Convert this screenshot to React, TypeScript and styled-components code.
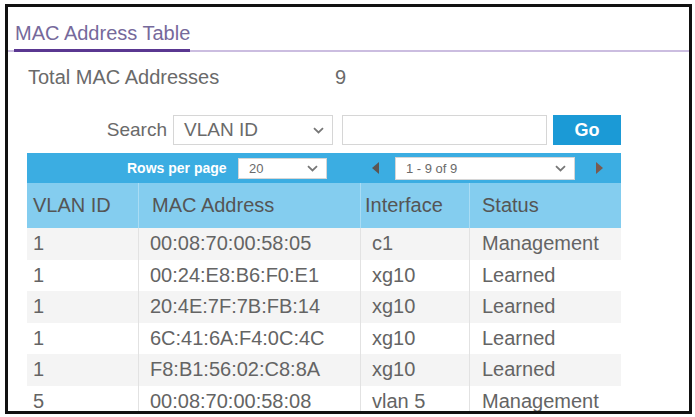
import styled, { createGlobalStyle } from 'styled-components'

const GlobalStyle = createGlobalStyle`
  html, body {
    margin: 0;
    padding: 0;
    background: #ffffff;
  }
  body {
    font-family: 'Liberation Sans', Arial, sans-serif;
    color: #5a5a5a;
  }
`

const Page = styled.div`
  width: 695px;
  height: 417px;
  padding: 4px 3px 3px 5px;
  box-sizing: border-box;
`

const Frame = styled.div`
  height: 100%;
  border: 3px solid #111;
  box-sizing: border-box;
  overflow: hidden;
  background: #fff;
  padding-top: 14px;
`

const TabBar = styled.div`
  display: flex;
  border-bottom: 2px solid #cbbde0;
`

const Tab = styled.div`
  margin-left: 6px;
  padding: 0 0 4px 1px;
  font-size: 20px;
  line-height: 24px;
  color: #76699b;
  border-bottom: 3px solid #5a3791;
  margin-bottom: -2px;
`

const Content = styled.div`
  padding: 0 68px 0 19px;
`

const TotalRow = styled.div`
  display: grid;
  grid-template-columns: 307px auto;
  padding: 13px 0 0 1px;
  font-size: 20px;
  line-height: 24px;
  color: #6a6a6a;
`

const SearchRow = styled.div`
  display: flex;
  justify-content: flex-end;
  align-items: center;
  margin-top: 26px;
  height: 30px;
`

const SearchLabel = styled.span`
  font-size: 19px;
  color: #6a6a6a;
  margin-right: 6px;
`

const SelectBox = styled.div<{ $w: number; $h: number; $size: number }>`
  display: flex;
  align-items: center;
  justify-content: space-between;
  width: ${(p) => p.$w}px;
  height: ${(p) => p.$h}px;
  box-sizing: border-box;
  background: #fff;
  border: 1px solid #d6d6d6;
  padding: 0 8px 0 10px;
  font-size: ${(p) => p.$size}px;
  color: #6a6a6a;
`

const Chevron = styled.svg`
  width: 11px;
  height: 7px;
  flex: none;
`

const TextInput = styled.div`
  width: 205px;
  height: 30px;
  box-sizing: border-box;
  border: 1px solid #d6d6d6;
  margin-left: 9px;
`

const GoButton = styled.button`
  width: 68px;
  height: 30px;
  margin-left: 6px;
  border: none;
  background: #1b9ad6;
  color: #fff;
  font-family: 'Liberation Sans', Arial, sans-serif;
  font-size: 18px;
  font-weight: bold;
`

const PagerBar = styled.div`
  display: flex;
  align-items: center;
  height: 30px;
  margin-top: 8px;
  background: #3badE2;
`

const PagerLabel = styled.span`
  margin-left: 100px;
  width: 111px;
  font-size: 14px;
  font-weight: bold;
  color: #fff;
`

const Arrow = styled.svg`
  width: 8px;
  height: 12px;
  flex: none;
`

const Table = styled.div`
  font-size: 20px;
`

const Row = styled.div<{ $head?: boolean; $alt?: boolean }>`
  display: grid;
  grid-template-columns: 111px 222px 109px 152px;
  height: ${(p) => (p.$head ? 45 : 31.5)}px;
  background: ${(p) => (p.$head ? '#84cdef' : p.$alt ? '#f4f4f4' : '#fff')};
  color: ${(p) => (p.$head ? '#555' : '#646464')};

  & > div {
    display: flex;
    align-items: center;
    border-left: 1px solid ${(p) => (p.$head ? '#a9dcf4' : '#e2e2e2')};
    white-space: nowrap;
  }
  & > div:first-child {
    border-left: none;
    padding-left: 6px;
  }
  & > div:nth-child(2) {
    padding-left: ${(p) => (p.$head ? 13 : 11)}px;
  }
  & > div:nth-child(3) {
    padding-left: ${(p) => (p.$head ? 4 : 11)}px;
  }
  & > div:nth-child(4) {
    padding-left: 12px;
  }
`

const rows = [
  ['1', '00:08:70:00:58:05', 'c1', 'Management'],
  ['1', '00:24:E8:B6:F0:E1', 'xg10', 'Learned'],
  ['1', '20:4E:7F:7B:FB:14', 'xg10', 'Learned'],
  ['1', '6C:41:6A:F4:0C:4C', 'xg10', 'Learned'],
  ['1', 'F8:B1:56:02:C8:8A', 'xg10', 'Learned'],
  ['5', '00:08:70:00:58:08', 'vlan 5', 'Management'],
]

function Down() {
  return (
    <Chevron viewBox='0 0 11 7'>
      <path d='M1 1.2 L5.5 5.5 L10 1.2' fill='none' stroke='#777' strokeWidth='1.8' />
    </Chevron>
  )
}

export default function App() {
  return (
    <Page>
      <GlobalStyle />
      <Frame>
        <TabBar>
          <Tab>MAC Address Table</Tab>
        </TabBar>
        <Content>
          <TotalRow>
            <span>Total MAC Addresses</span>
            <span>9</span>
          </TotalRow>

          <SearchRow>
            <SearchLabel>Search</SearchLabel>
            <SelectBox $w={160} $h={30} $size={19}>
              VLAN ID
              <Down />
            </SelectBox>
            <TextInput />
            <GoButton>Go</GoButton>
          </SearchRow>

          <PagerBar>
            <PagerLabel>Rows per page</PagerLabel>
            <SelectBox $w={89} $h={21} $size={13}>
              20
              <Down />
            </SelectBox>
            <Arrow viewBox='0 0 8 12' style={{ marginLeft: 45 }}>
              <path d='M7 0 L0 6 L7 12 Z' fill='#5b5552' />
            </Arrow>
            <SelectBox $w={180} $h={23} $size={13} style={{ marginLeft: 15 }}>
              1 - 9 of 9
              <Down />
            </SelectBox>
            <Arrow viewBox='0 0 8 12' style={{ marginLeft: 20 }}>
              <path d='M1 0 L8 6 L1 12 Z' fill='#7a5a50' />
            </Arrow>
          </PagerBar>

          <Table>
            <Row $head>
              <div>VLAN ID</div>
              <div>MAC Address</div>
              <div>Interface</div>
              <div>Status</div>
            </Row>
            {rows.map((r, i) => (
              <Row key={i} $alt={i % 2 === 0}>
                {r.map((c, j) => (
                  <div key={j}>{c}</div>
                ))}
              </Row>
            ))}
          </Table>
        </Content>
      </Frame>
    </Page>
  )
}
